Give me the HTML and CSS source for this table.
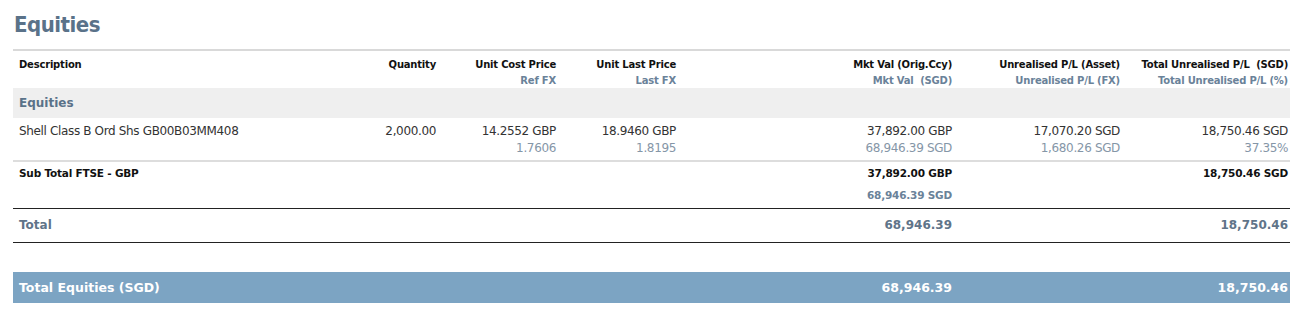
FILE: index.html
```html
<!DOCTYPE html>
<html>
<head>
<meta charset="utf-8">
<link rel="stylesheet" href="styles.css">
</head>
<body>
<div class="page">
  <h1 class="title">Equities</h1>
  <div class="table">
    <div class="row head">
      <div class="cell left"><div class="h1">Description</div></div>
      <div class="cell"><div class="h1">Quantity</div></div>
      <div class="cell"><div class="h1">Unit Cost Price</div><div class="h2">Ref FX</div></div>
      <div class="cell"><div class="h1">Unit Last Price</div><div class="h2">Last FX</div></div>
      <div class="cell"><div class="h1">Mkt Val (Orig.Ccy)</div><div class="h2">Mkt Val&nbsp; (SGD)</div></div>
      <div class="cell"><div class="h1">Unrealised P/L (Asset)</div><div class="h2">Unrealised P/L (FX)</div></div>
      <div class="cell"><div class="h1">Total Unrealised P/L&nbsp; (SGD)</div><div class="h2">Total Unrealised P/L (%)</div></div>
    </div>
    <div class="group">Equities</div>
    <div class="row data">
      <div class="cell left"><div class="v1">Shell Class B Ord Shs GB00B03MM408</div></div>
      <div class="cell"><div class="v1">2,000.00</div></div>
      <div class="cell"><div class="v1">14.2552 GBP</div><div class="v2">1.7606</div></div>
      <div class="cell"><div class="v1">18.9460 GBP</div><div class="v2">1.8195</div></div>
      <div class="cell"><div class="v1">37,892.00 GBP</div><div class="v2">68,946.39 SGD</div></div>
      <div class="cell"><div class="v1">17,070.20 SGD</div><div class="v2">1,680.26 SGD</div></div>
      <div class="cell"><div class="v1">18,750.46 SGD</div><div class="v2">37.35%</div></div>
    </div>
    <div class="row sub">
      <div class="cell left"><div class="s1">Sub Total FTSE - GBP</div></div>
      <div class="cell"></div>
      <div class="cell"></div>
      <div class="cell"></div>
      <div class="cell"><div class="s1">37,892.00 GBP</div><div class="s2">68,946.39 SGD</div></div>
      <div class="cell"></div>
      <div class="cell"><div class="s1">18,750.46 SGD</div></div>
    </div>
    <div class="row total">
      <div class="cell left">Total</div>
      <div class="cell"></div>
      <div class="cell"></div>
      <div class="cell"></div>
      <div class="cell">68,946.39</div>
      <div class="cell"></div>
      <div class="cell">18,750.46</div>
    </div>
    <div class="row grand">
      <div class="cell left">Total Equities (SGD)</div>
      <div class="cell"></div>
      <div class="cell"></div>
      <div class="cell"></div>
      <div class="cell">68,946.39</div>
      <div class="cell"></div>
      <div class="cell">18,750.46</div>
    </div>
  </div>
</div>
</body>
</html>
```

FILE: styles.css
```css
* { box-sizing: border-box; }
html, body { margin: 0; padding: 0; background: #fff; }
body { font-family: "DejaVu Sans", "Liberation Sans", sans-serif; color: #222; }
.page { padding: 0 9px 0 13px; }
.title {
  margin: 0;
  padding: 11px 0 0 1px;
  height: 49px;
  font-family: "DejaVu Sans Condensed", "DejaVu Sans", sans-serif;
  font-size: 22px;
  line-height: 28px;
  font-weight: bold;
  color: #5a7289;
  letter-spacing: -0.5px;
}
.table { border-top: 2px solid #d9d9d9; }
.row {
  display: grid;
  grid-template-columns: 303px 122px 120px 120px 276px 168px 168px;
}
.cell { text-align: right; padding-right: 2px; }
.cell.left { text-align: left; padding-left: 6px; }
.head { padding-top: 6px; height: 37px; }
.h1 { font-size: 10px; font-weight: bold; line-height: 16px; color: #111; letter-spacing: -0.2px; }
.h2 { font-size: 10px; font-weight: bold; line-height: 16px; color: #6a8299; letter-spacing: -0.2px; }
.group {
  background: #efefef;
  height: 30px;
  line-height: 31px;
  padding-left: 6px;
  font-size: 12px;
  font-weight: bold;
  color: #5a7289;
}
.data { padding-top: 5px; height: 44px; border-bottom: 2px solid #dddddd; }
.v1 { font-size: 12px; line-height: 17px; color: #333; letter-spacing: -0.35px; }
.v2 { font-size: 12px; line-height: 17px; color: #8596a7; letter-spacing: -0.35px; }
.sub { padding-top: 2px; height: 47px; border-bottom: 1px solid #222; }
.s1 { font-size: 10.5px; font-weight: bold; line-height: 18px; color: #111; letter-spacing: -0.2px; }
.s2 { font-size: 10.5px; font-weight: bold; line-height: 26px; color: #6a8299; letter-spacing: -0.2px; }
.total {
  height: 34px;
  line-height: 32px;
  border-bottom: 1px solid #222;
  font-size: 12px;
  font-weight: bold;
  color: #5f7489;
}
.grand {
  margin-top: 29px;
  background: #7ca4c3;
  height: 31px;
  line-height: 31px;
  font-size: 12.5px;
  font-weight: bold;
  color: #fff;
}
```
